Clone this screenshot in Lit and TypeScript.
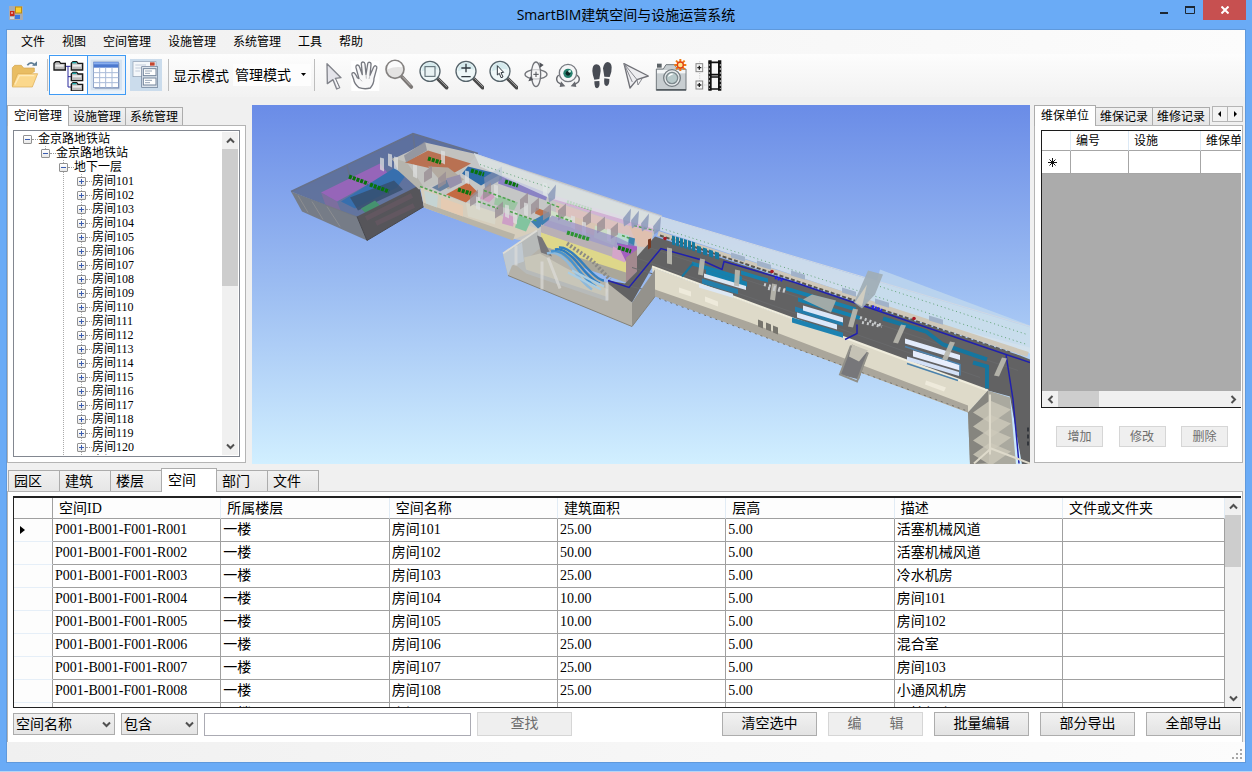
import { LitElement, html, svg, css } from "lit";
import { customElement, property, state } from "lit/decorators.js";
import { classMap } from "lit/directives/class-map.js";

const controls = css`
  * { box-sizing: border-box; }
  button, select, input { font: inherit; color: inherit; margin: 0; border-radius: 0; }
  svg { display: block; }
  .tabs { display: flex; align-items: flex-end; position: relative; z-index: 1; }
  .tab {
    border: 1px solid #acacac; border-bottom: 0; margin: 0 0 0 -1px; padding: 0 4px; height: 18px;
    line-height: 16px; background: linear-gradient(#f1f1f1, #e6e6e6); white-space: nowrap;
  }
  .tab:first-child { margin-left: 0; }
  .tab.on { background: #fff; height: 21px; margin-bottom: -1px; padding: 0 6px; }
  .panel { background: #fff; border: 1px solid #b4b4b4; }
  .push { border: 1px solid #adadad; background: linear-gradient(#f2f2f2, #e3e3e3); padding: 0; text-align: center; white-space: pre; }
  .push:disabled { border-color: #d6d6d6; background: #efefef; color: #6d6d6d; }
  .vbar { display: flex; flex-direction: column; width: 16px; background: #f0f0f0; }
  .hbar { display: flex; height: 16px; background: #f0f0f0; }
  .arrow { border: 0; padding: 0; background: none; display: grid; place-items: center; width: 16px; height: 17px; flex: none; }
  .thumb { background: #cdcdcd; }
  .space { flex: 1; }
`;

const chevron = (d: string) => svg`<svg width="9" height="9" viewBox="0 0 9 9"><path d=${d} fill="none" stroke="#505050" stroke-width="2"/></svg>`;
const UP = "M1 6.5L4.500 3L8 6.500", DOWN = "M1 2.500L4.500 6L8 2.500", LEFT = "M6.500 1L3 4.500L6.500 8", RIGHT = "M2.500 1L6 4.500L2.500 8";

const lens = svg`
  <path d="M60 60L86 86" stroke="#4a4a4a" stroke-width="11" stroke-linecap="round"/>
  <path d="M62 59L86 83" stroke="#9a9a9a" stroke-width="3" stroke-linecap="round"/>
  <circle cx="36" cy="37" r="30" fill="#eef7f8" stroke="#56646b" stroke-width="4"/>
  <path d="M12 37A24 24 0 0 1 60 32Q36 24 12 37" fill="#d5eaed"/>`;

const folders = svg`
  <path d="M40 22H56M48 22V84M48 53H60M48 84H60" stroke="#2a2a9c" stroke-width="3" fill="none"/>
  ${[[6, 9], [58, 9], [58, 41], [58, 72]].map(([x, y], i) => svg`
    <path d="M${x} ${y + 4}l5 -5h11l4 5h14v20h-34z" fill="#bdbdbd" stroke="#1b1b1b" stroke-width="4"/>
    <path d="M${x + 4} ${y + 8}h25v6h-25z" fill="#ededed"/>
    ${i ? svg`<path d="M${x + 3} ${y}h12v4h-12z" fill="#18a7a7"/>` : ""}`)}`;

const icons: Record<string, [number, unknown]> = {
  open: [30, svg`
    <path d="M4 82V26l7-7h20l7 8h32v12" fill="#e9bd62" stroke="#d0a24c" stroke-width="2"/>
    <path d="M4 84L20 44H80L64 84Z" fill="#fbd88c" stroke="#dba94f" stroke-width="2"/>
    <path d="M12 76L25 50H70" fill="none" stroke="#ffeab8" stroke-width="4"/>
    <path d="M49 19Q60 4 72 19" fill="none" stroke="#5f7d95" stroke-width="5"/><path d="M63 20H78V7Z" fill="#5f7d95"/>`],
  tree: [34, folders],
  grid: [34, svg`
    <rect x="2" y="2" width="94" height="92" fill="#d6e3f1"/><rect x="14" y="12" width="74" height="77" fill="#8798b8"/>
    <rect x="11" y="9" width="74" height="77" fill="#fff" stroke="#6c86b6" stroke-width="2"/>
    <rect x="11" y="9" width="74" height="17" fill="#4c79cf"/><rect x="11" y="10" width="74" height="6" fill="#89aeee"/>
    <path d="M29 26V86M47 26V86M66 26V86M11 41H85M11 56H85M11 71H85" stroke="#a9bbd8" stroke-width="3"/>`],
  cards: [32, svg`
    <rect width="96" height="96" fill="#cbdcec"/>
    <rect x="9" y="8" width="69" height="45" fill="#f4f7fa" stroke="#8c9cb0" stroke-width="2"/>
    <path d="M16 18H48M16 27H34M16 36H30" stroke="#c2ccda" stroke-width="3"/><rect x="60" y="10" width="14" height="10" fill="#c4452f"/>
    <rect x="35" y="23" width="48" height="62" fill="#dce3ec" stroke="#64778f" stroke-width="2"/>
    <rect x="40" y="29" width="38" height="21" fill="#fff" stroke="#71839a" stroke-width="3"/><rect x="40" y="57" width="38" height="21" fill="#fff" stroke="#71839a" stroke-width="3"/>
    <path d="M45 36H66M45 43H60M45 64H66M45 71H60" stroke="#99a7b8" stroke-width="3"/>`],
  select: [24, svg`<path d="M15 14L57 56L40 58L53 86L44 90L33 62L16 74Z" fill="#e4e4ea" stroke="#81838a" stroke-width="4" stroke-linejoin="round"/><path d="M38 61L49 86" stroke="#fff" stroke-width="3"/>`],
  hand: [30, svg`
    <rect x="4" y="6" width="84" height="90" fill="#fff"/>
    <path d="M27 86Q13 75 11 61L6 47Q5 40 11 41Q16 43 22 56L27 59L18 26Q17 18 23 18Q27 18 29 25L37 47L34 15Q34 9 39 9Q44 9 45 15L48 46L53 15Q54 9 59 10Q64 11 63 17L60 49L71 24Q74 19 78 21Q82 23 80 29L72 58Q72 75 61 87Q44 92 27 86Z" fill="#f8f8f9" stroke="#777980" stroke-width="4" stroke-linejoin="round"/>
    <path d="M31 61L36 67M48 46L49 59M60 49L57 60" stroke="#a0a0a5" stroke-width="2"/>`],
  zoom: [30, svg`
    <path d="M54 54L82 84" stroke="#7b7775" stroke-width="11" stroke-linecap="round"/><path d="M55 53L80 79" stroke="#bdb9b7" stroke-width="3"/>
    <circle cx="33" cy="31" r="27" fill="#e4e3e2" stroke="#858280" stroke-width="5"/><path d="M11 31A22 22 0 0 1 55 25Q32 21 11 31" fill="#fbfbfb"/>`],
  region: [32, svg`${lens}<rect x="21" y="23" width="30" height="29" fill="#e8f2f3" stroke="#55656c" stroke-width="3"/>`],
  scale: [30, svg`${lens}<path d="M22 27H50M36 14V40M22 53H50" stroke="#303940" stroke-width="4"/>`],
  pick: [30, svg`${lens}<path d="M28 20L47 40L39 41L45 54L39 56L34 43L28 48Z" fill="#fff" stroke="#303940" stroke-width="3"/>`],
  orbit: [28, svg`
    <ellipse cx="42" cy="46" rx="33" ry="14" fill="none" stroke="#73757a" stroke-width="4"/>
    <ellipse cx="42" cy="46" rx="14" ry="37" fill="#f5f5f6" fill-opacity=".7" stroke="#73757a" stroke-width="4"/>
    <path d="M34 46H50M42 38V54" stroke="#4b4d52" stroke-width="3"/><path d="M52 10L65 18L54 26ZM26 52L34 63L19 67Z" fill="#505258"/>`],
  eye: [28, svg`
    <path d="M14 48Q3 59 12 70L26 79M69 48Q81 59 72 70L58 79" fill="none" stroke="#67696f" stroke-width="4"/>
    <path d="M21 67L34 82L17 84ZM63 67L50 82L67 84Z" fill="#67696f"/>
    <circle cx="42" cy="42" r="26" fill="#f5f6f7" stroke="#777a80" stroke-width="4"/><circle cx="42" cy="43" r="14" fill="#27816f"/><circle cx="42" cy="43" r="7" fill="#0c2724"/><circle cx="47" cy="37" r="4" fill="#c9eee4"/>`],
  walk: [32, svg`
    <path d="M31 16Q19 17 19 36Q20 50 25 62L40 60L44 36Q45 17 31 16ZM25 67L40 66Q43 86 33 88Q25 88 25 67ZM65 9Q54 10 51 28L55 53L71 54Q78 38 77 25Q76 10 65 9ZM55 58L70 60Q71 80 61 81Q52 79 55 58Z" fill="#484c54"/>`],
  fly: [28, svg`
    <path d="M6 14L79 51L45 62L24 87Z" fill="#ededf0" stroke="#707177" stroke-width="4" stroke-linejoin="round"/>
    <path d="M6 14L45 62L48 78L61 58M6 14L31 69" fill="none" stroke="#888990" stroke-width="3"/>`],
  camera: [34, svg`
    <path d="M7 30H28L36 17H62L70 30H96V94H7Z" fill="#c8ced1" stroke="#72797d" stroke-width="3"/>
    <path d="M9 33H94V43H9Z" fill="#f3f5f6"/><path d="M7 92H96" stroke="#555c60" stroke-width="4"/><rect x="9" y="14" width="14" height="12" fill="#5b6266"/>
    <circle cx="54" cy="57" r="25" fill="#e7ebed" stroke="#747c81" stroke-width="4"/><circle cx="54" cy="57" r="17" fill="#b8c9ca" stroke="#7d898d" stroke-width="4"/><path d="M42 54A12 12 0 0 1 59 45Q49 49 42 54" fill="#fff"/>
    <path d="M79 0V36M61 18H97M66 5L92 31M92 5L66 31" stroke="#ef7b13" stroke-width="6"/><circle cx="79" cy="18" r="9" fill="#ffe58b" stroke="#e23f16" stroke-width="4"/>`],
  film: [32, svg`
    <path d="M23 7V92M23 26H46M23 78H46" stroke="#aaa" stroke-width="2" stroke-dasharray="3 4"/>
    ${[14, 66].map(y => svg`<rect x="12" y=${y} width="20" height="24" fill="#f5f5f5" stroke="#888" stroke-width="3"/><path d="M16 ${y + 12}H28M22 ${y + 6}V${y + 18}" stroke="#222" stroke-width="4"/>`)}
    <path d="M49 4H59V95H49ZM78 4H88V95H78Z" fill="#111"/><path d="M50 10H87M50 47H87M50 54H87M50 90H87" stroke="#111" stroke-width="5"/>
    <path d="M52 16V90M85 16V90" stroke="#fff" stroke-width="3" stroke-dasharray="4 8"/>`],
};

const icon = (name: string) => {
  const [w, body] = icons[name];
  return html`<svg width=${w} height="32" viewBox="0 0 ${w * 3} 96" aria-hidden="true">${body}</svg>`;
};

@customElement("room-tree")
class RoomTree extends LitElement {
  static styles = [controls, css`
    :host { display: flex; flex-direction: column; min-height: 0; font-size: 12px; }
    .panel { flex: 1; min-height: 0; display: flex; padding: 4px 5px 5px; }
    .box { flex: 1; display: flex; border: 1px solid #828790; min-width: 0; padding: 1px; }
    .scroll { flex: 1; overflow: hidden; }
    ul { list-style: none; margin: 0; padding: 0; }
    .root { margin-left: 8px; }
    ul ul { margin-left: 18px; background: repeating-linear-gradient(#aaa 0 1px, #fff 1px 2px) 4px 0 / 1px 100% no-repeat; }
    .root > li > ul { background-size: 1px 6px; }
    .node { display: flex; align-items: center; height: 14px; line-height: 14px; white-space: nowrap; }
    .node::after { content: ""; order: 1; width: 6px; border-top: 1px dotted #999; }
    .label { order: 2; }
    .fold { order: 0; width: 9px; height: 9px; padding: 0; border: 1px solid #919191; border-radius: 1px; background: linear-gradient(#fff, #e8e8e8); }
    .thumb { height: 137px; }
  `];

  node(name: string, open: boolean, children: unknown = "") {
    return html`<li role="treeitem" aria-expanded=${open}>
      <div class="node">
        <button class="fold" aria-label=${(open ? "收起" : "展开") + name}>
          <svg width="7" height="7" viewBox="0 0 7 7"><path d=${open ? "M1 3.500H6" : "M1 3.500H6M3.500 1V6"} stroke="#3a5cb0"/></svg>
        </button><span class="label">${name}</span>
      </div>${children}</li>`;
  }

  render() {
    const rooms = Array.from({ length: 21 }, (_, i) => "房间" + (101 + i));
    return html`
      <div class="tabs" role="tablist">
        <button class="tab on" role="tab">空间管理</button><button class="tab" role="tab">设施管理</button><button class="tab" role="tab">系统管理</button>
      </div>
      <div class="panel"><div class="box">
        <div class="scroll"><ul class="root" role="tree">
          ${this.node("金京路地铁站", true, html`<ul role="group">
            ${this.node("金京路地铁站", true, html`<ul role="group">
              ${this.node("地下一层", true, html`<ul role="group">${rooms.map(r => this.node(r, false))}</ul>`)}
            </ul>`)}
          </ul>`)}
        </ul></div>
        <div class="vbar"><button class="arrow" aria-label="向上">${chevron(UP)}</button><div class="thumb"></div><div class="space"></div><button class="arrow" aria-label="向下">${chevron(DOWN)}</button></div>
      </div></div>`;
  }
}

type Pt = [number, number];
const pts = (p: Pt[]) => p.map(q => q.join(",")).join(" ");

@customElement("model-view")
class ModelView extends LitElement {
  static styles = css`
    :host { display: block; min-width: 0; min-height: 0; overflow: hidden; background: linear-gradient(#6a8ce7, #9dbef2 52%, #d1efff); }
    svg { display: block; width: 100%; height: 100%; }
  `;

  /* A thin slab that follows the fall of the station axis. */
  bar(x: number, y: number, len: number, fill: string, thick = 5) {
    const d = len * 0.3;
    return svg`<polygon points=${pts([[x, y], [x + len, y + d], [x + len, y + d + thick], [x, y + thick]])} fill=${fill}/>`;
  }

  column(x: number, y: number, dx = 0, h = 16) {
    return svg`<polygon points=${pts([[x, y], [x + 5, y + 1], [x + 5 - dx, y + h + 1], [x - dx, y + h]])} fill="#b9b7ae" fill-opacity=".92"/>`;
  }

  render() {
    const greens: Pt[] = [[349, 177], [370, 185], [428, 159], [458, 190], [471, 171], [505, 182], [618, 248]];
    return html`<svg viewBox="252 105 778 360" preserveAspectRatio="xMidYMid slice" role="img" aria-label="金京路地铁站三维模型">
      <polygon points="291,192 413,134 478,154 455,180 420,190 357,218" fill="#566384" fill-opacity=".75"/>
      <path d="M291 192L413 134L478 154M347 166L350 178M413 134L415 151" fill="none" stroke="#66718b" stroke-width="1.500"/>
      <polygon points="321,193 380,164 388,174 337,202" fill="#a063bd" fill-opacity=".85"/>
      <polygon points="321,193 337,202 341,212 326,207" fill="#8d6b9f" fill-opacity=".6"/>
      <polygon points="341,202 395,168 407,174 397,188 355,209" fill="#376fae"/>
      <polygon points="350,198 394,181 403,190 358,211" fill="#354e6c" fill-opacity=".8"/>
      <polygon points="361,209 375,201 380,206 367,215" fill="#45926f"/>
      <polygon points="291,192 357,217 367,241 302,212" fill="#74787f" fill-opacity=".93"/>
      <path d="M298 196L308 213M312 202L323 220M327 207L340 227" stroke="#8b8d91" stroke-width="1"/>
      <polygon points="357,217 419,186 424,207 367,241" fill="#56555a"/>
      <path d="M366 219L412 196M376 224L414 206" stroke="#6a5965" stroke-width="5" opacity=".6"/>
      <path d="M357 217L367 241L424 207" fill="none" stroke="#48484c"/>

      <polygon points="392,160 409,152 425,143 478,155 560,182 662,216 652,240 626,282 540,243 516,240 420,188" fill="#cbc9c2" fill-opacity=".92"/>
      <polygon points="392,158 407,163 424,188 419,190 398,171" fill="#b5b4ad"/>
      <polygon points="405,163 428,151 471,164 453,174" fill="#b97152"/>
      <polygon points="404,156 425,142 427,151 406,163" fill="#8a8c98" fill-opacity=".8"/>
      <polygon points="446,195 468,183 478,193 466,203" fill="#c46a42"/>
      <polygon points="462,174 468,167 500,175 481,186" fill="#306ca8"/>
      <polygon points="500,175 548,194 546,201 498,184" fill="#8a83c4"/>
      <polygon points="484,178 502,167 502,180 485,189" fill="#7788ad" fill-opacity=".85"/>
      <polygon points="428,167 448,168 464,180 448,190" fill="#b3aaa0"/>
      <polygon points="432,188 447,180 455,184 440,192" fill="#68809f"/>
      <polygon points="446,179 460,175 462,183 450,189" fill="#9791ac"/>
      <polygon points="420,187 470,205 497,215 540,230 513,240 424,208" fill="#d6cebd"/>
      <polygon points="423,203 515,235 513,241 424,208" fill="#b9b4a6"/>
      <polygon points="424,191 438,196 437,208 426,204" fill="#c5d4d3"/>
      <polygon points="441,198 463,206 463,217 441,209" fill="#e5cbb2"/>
      <polygon points="466,203 496,213 495,225 468,217" fill="#d8d6c8"/>
      <polygon points="484,192 496,196 489,203 480,199" fill="#cda0c1"/>
      <polygon points="496,195 518,203 514,211 494,205" fill="#9dc4a4"/>
      <polygon points="504,213 515,218 513,227 502,224" fill="#cd9fc6"/>
      <polygon points="519,215 531,221 526,232 515,228" fill="#82c49f"/>
      <polygon points="536,208 549,213 547,219 535,214" fill="#bd7048"/>
      <polygon points="531,222 549,212 551,219 538,229" fill="#3f7fb1"/>
      <polygon points="554,196 654,226 652,234 553,201" fill="#d2b3d5"/>
      <polygon points="556,203 652,234 650,247 556,216" fill="#dcc2bf"/>
      <polygon points="551,211 573,219 571,228 549,221" fill="#d0dfc9"/>
      <polygon points="573,217 598,225 594,236 571,228" fill="#d9c5b4"/>
      <polygon points="595,226 617,234 614,246 594,238" fill="#cbddc5"/>
      <polygon points="629,226 652,233 652,248 638,247" fill="#dfc0af"/>
      <polygon points="617,234 635,239 634,247 617,245" fill="#3c82ae"/>
      <polygon points="617,233 629,236 628,246 617,243" fill="#b9dcd2"/>
      ${([[424, 166], [438, 172], [470, 190], [483, 183], [495, 202], [520, 193], [531, 198], [543, 204], [558, 204], [583, 211], [597, 217], [610, 223]] as Pt[]).map(([x, y]) =>
        svg`<polygon points=${pts([[x, y + 7], [x + 8, y], [x + 8, y + 12], [x, y + 17]])} fill="#9a8f95" fill-opacity=".8"/>`)}
      ${([[380, 158], [388, 154], [394, 157], [413, 165], [441, 151], [465, 171], [476, 197], [494, 185], [505, 205], [524, 203], [543, 183], [571, 216], [582, 222], [607, 229], [513, 211]] as Pt[]).map(([x, y]) =>
        svg`<polygon points=${pts([[x, y], [x + 4, y + 1], [x + 4, y + 14], [x, y + 12]])} fill="#dedfdf" fill-opacity=".75"/>`)}
      <polygon points="552,216 618,238 637,247 626,257 543,226" fill="#8c84c7" fill-opacity=".6"/>
      <polygon points="541,225 626,253 626,264 541,233" fill="#b9b0b5"/>
      <polygon points="541,233 626,262 626,274 541,246" fill="#ded78a"/>
      <polygon points="541,246 626,273 626,283 541,254" fill="#aaa79a"/>
      <polygon points="613,247 626,253 625,263 612,258" fill="#d4a5c9"/>
      <polygon points="617,244 637,247 637,256 626,262" fill="#a45fc0"/>
      <polygon points="626,258 637,250 637,272 626,284" fill="#a3898f"/>
      ${greens.map(([x, y], i) => svg`<path d="M${x} ${y}l${i < 2 ? 19 : 13} ${i < 2 ? 7 : 4}" stroke="#08740b" stroke-width="4" stroke-dasharray="3 1"/>`)}
      <path d="M567 233l23 7" stroke="#2b9430" stroke-width="4" stroke-dasharray="3 1"/>
      <path d="M567 202l25 8" stroke="#6ab068" stroke-width="3" stroke-dasharray="2 1"/>
      <path d="M420 187L450 198M484 191L516 203M478 202L498 209M510 212L538 222M547 203L560 208M556 216L572 222M634 226L654 231M622 236L630 239" stroke="#51a34f" stroke-width="1.500" stroke-dasharray="3 2"/>

      <polygon points="474,154 548,180 660,217 1030,328 1030,354 660,231 548,198 480,167" fill="#e1e9e9" fill-opacity=".72"/>
      <polygon points="880,270 1030,326 1030,348 870,307" fill="#c4dced" fill-opacity=".7"/>
      <path d="M474 154L548 180L660 217L1030 327" fill="none" stroke="#d0d8e3"/>
      <path d="M480 165L552 189M662 229L1027 345M880 287L1027 335" fill="none" stroke="#62a477" stroke-dasharray="1 3"/>
      ${([[548, 185], [623, 209], [631, 211], [641, 214], [653, 217]] as Pt[]).map(([x, y]) => svg`<polygon points=${pts([[x, y + 10], [x + 8, y], [x + 7, y + 14], [x + 1, y + 18]])} fill="#8796b8" fill-opacity=".8"/>`)}
      <path d="M658 234L1028 355" stroke="#cfc8b9" stroke-width="5"/>
      <path d="M660 236L1010 353" stroke="#57554f" stroke-width="2" stroke-dasharray="4 2"/>

      <polygon points="655,237 1020,356 1030,360 1030,465 1022,465 1010,397 988,391 750,304 652,268 632,303 608,294 608,281 625,284 637,272 637,257" fill="#626263"/>
      <path d="M622 285L675 297M632 268L700 289M638 259L980 378M649 248L1018 371" stroke="#68696b"/>
      <polygon points="652,268 750,304 988,391 968,413 750,332 655,296" fill="#dedac9"/>
      <polygon points="655,290 750,323 968,406 968,413 750,332 655,297" fill="#aaa69b"/>
      <path d="M652 267L988 391" stroke="#efecdc" stroke-width="2"/>
      <path d="M659 299L966 411" stroke="#77756f" stroke-dasharray="2 4"/>
      <polygon points="655,270 632,303 632,327 655,297" fill="#94928c"/>
      <polygon points="503,255 537,231 541,246 608,284 632,303 632,327 508,276" fill="#b5b2a9"/>
      <polygon points="503,255 537,231 541,248 524,262 560,276 608,290 608,302 526,274" fill="#b7bab9"/>
      <polygon points="524,258 540,254 565,268 608,290 606,297 526,270" fill="#c8c6b9"/>
      <polygon points="537,236 542,238 552,257 541,253" fill="#77767a"/>
      <polygon points="503,255 522,243 524,262 512,266 508,276" fill="#c1cbd4" fill-opacity=".9"/>
      <path d="M503 254L537 231" stroke="#dddcd6" stroke-width="2"/>
      <path d="M508 276L632 327L655 297" fill="none" stroke="#848278"/>
      ${[0, 1, 2, 3].map(i => svg`<path d="M${547 + i * 4} ${254 - i * 2}Q${559 + i * 3} ${250 - i} ${571 + i * 4} ${267 - i}T${592 + i * 4} ${290 - i * 3}" fill="none" stroke=${["#8db9dc", "#4793cf", "#2e7cc0", "#357fbd"][i]} stroke-width="2.500"/>`)}
      <path d="M572 271L604 287M568 273L601 290" fill="none" stroke="#a9cde4" stroke-width="2"/>
      <path d="M567 244L592 261L610 280" stroke="#8b8a85" stroke-width="4" fill="none" stroke-dasharray="2 2"/>
      <path d="M516 246V266M542 262V290M548 258L560 289M607 283V301" stroke="#dededb" stroke-width="3" opacity=".65"/>
      <polygon points="648,240 651,239 651,248 648,250" fill="#783820"/>

      <path d="M608 281L629 288L661 249L700 260L722 270L724 262L795 283L1006 355L1030 363M1006 355L1013 400L1019 464M845 340L857 334L857 325" fill="none" stroke="#2020ae" stroke-width="1.500"/>
      ${[0, 1, 2, 3, 4, 5].map(i => this.bar(672 + i * 4, 236 + i * 1.2, 3, "#16789f", 9))}
      ${[0, 1, 2, 3].map(i => this.bar(697 + i * 6, 246 + i * 2, 4, "#16789f", 7))}
      ${this.bar(692, 262, 50, "#1680ad", 4)}${this.bar(706, 270, 41, "#1680ad", 5)}${this.bar(741, 271, 27, "#1680ad", 4)}
      ${this.bar(704, 274, 42, "#dce7f4", 4)}${this.bar(702, 279, 36, "#257fab", 5)}${this.bar(699, 284, 34, "#dce7f4", 4)}
      ${this.bar(786, 287, 70, "#1680ad", 4)}${this.bar(798, 298, 62, "#1680ad", 4)}${this.bar(795, 307, 48, "#247dac", 5)}
      ${this.bar(803, 306, 40, "#dbe6f7", 5)}${this.bar(797, 313, 40, "#dce8fa", 5)}${this.bar(792, 318, 51, "#1d82b1", 5)}
      <polygon points="803,300 812,295 836,301 831,313" fill="#a1aaa8"/>
      <path d="M883 319L926 332L943 345L987 360M973 363L987 367V389" fill="none" stroke="#16769f" stroke-width="4"/>
      <path d="M693 264L682 277" stroke="#16769f" stroke-width="2"/>
      ${this.bar(905, 339, 55, "#e2ebfb", 5)}${this.bar(913, 351, 47, "#e7eefc", 6)}${this.bar(907, 357, 52, "#d3e1f7", 4)}
      <path d="M905 347L960 365V376M907 364L958 381" fill="none" stroke="#4b82ad" stroke-width="1.500"/>
      ${this.column(667, 248)}${this.column(700, 259, 2)}${this.column(735, 270, 1)}${this.column(772, 284, 2)}${this.column(853, 309, 5, 18)}${this.column(901, 325, 8, 18)}${this.column(950, 342, 8, 18)}${this.column(1002, 358, 8, 18)}
      <path d="M764 285l23 6M768 289l18 3M860 318l22 8M862 323l20 4" stroke="#c7cacc" stroke-width="3" stroke-dasharray="2 3"/>
      ${([[731, 253], [757, 261], [791, 271], [842, 288], [875, 299], [929, 316]] as Pt[]).map(([x, y]) => this.bar(x, y, 14, "#a1b2c9", 5))}
      ${([[665, 239], [772, 272], [914, 319]] as Pt[]).map(([x, y]) => svg`<circle cx=${x} cy=${y} r="1.800" fill="#a71824"/>`)}
      <path d="M775 278l8 3M872 307l10 4" stroke="#2222ed" stroke-width="3" stroke-dasharray="2 1"/>
      <polygon points="868,271 883,275 875,295 862,309 854,303" fill="#9facb5" fill-opacity=".92"/><polygon points="867,285 862,307 855,303" fill="#d0cdc1"/>
      <polygon points="852,345 868,353 859,380 840,375" fill="#77777a"/><polygon points="852,345 868,351 859,362 849,357" fill="#c5c2b5"/><path d="M851 346L840 375L857 382L868 353" fill="none" stroke="#919089" stroke-width="2"/>
      <path d="M758 320l5 2v7l-5-2zM766 323l5 2v7l-5-2zM773 326l5 2v7l-5-2z" fill="#77756d"/>
      <path d="M679 288l12 4v5l-12-4zM705 297l13 5v5l-13-5zM926 381l20 7-2 4-19-7z" fill="#eeeadb"/>
      <polygon points="968,413 988,391 1010,398 1016,465 970,465" fill="#aaa99f"/>
      <polygon points="968,413 988,391 989,463 970,465" fill="#86857f"/>
      ${[0, 1, 2, 3].map(i => svg`<polygon points=${pts([[973, 413 + i * 14], [990, 401 + i * 14], [1011, 410 + i * 14], [991, 424 + i * 14]])} fill="#cdc9ba" fill-opacity=".8"/>`)}
      <path d="M990 395V455M974 464L991 449L1030 464" fill="none" stroke="#dedacb" stroke-width="2"/>
      <path d="M1028 428V448" stroke="#33363c" stroke-width="2" stroke-dasharray="4 3"/>
    </svg>`;
  }
}

@customElement("maintenance-panel")
class MaintenancePanel extends LitElement {
  static styles = [controls, css`
    :host { display: flex; flex-direction: column; min-height: 0; font-size: 12px; }
    .spin { display: flex; margin: 0 0 3px auto; }
    .step { width: 16px; height: 16px; padding: 0; border: 1px solid #b5b5b5; margin-left: -1px; background: #f3f3f3; display: grid; place-items: center; }
    .panel { flex: 1; min-height: 0; display: flex; flex-direction: column; padding: 4px 1px 15px 6px; }
    .grid { flex: 1; display: flex; flex-direction: column; background: #ababab; border: 1px solid #1c1c1c; border-right: 0; overflow: hidden; }
    .view { flex: 1; overflow: hidden; }
    table { border-collapse: separate; border-spacing: 0; table-layout: fixed; width: 288px; background: #fff; }
    th, td { border: solid #a6a6a6; border-width: 0 1px 1px 0; padding: 0 0 0 5px; text-align: left; font-weight: 400; white-space: nowrap; }
    thead th { height: 20px; line-height: 18px; border-right-color: #dce9f5; }
    tbody tr > * { height: 23px; }
    tbody th { font-size: 16px; line-height: 20px; }
    .mark { width: 29px; } .code { width: 58px; } .item { width: 72px; }
    .thumb { width: 41px; }
    .actions { display: flex; justify-content: space-between; padding: 18px 13px 0 15px; }
    .push { width: 47px; height: 21px; line-height: 18px; }
  `];
  render() {
    return html`
      <div class="tabs" role="tablist">
        <button class="tab on" role="tab">维保单位</button><button class="tab" role="tab">维保记录</button><button class="tab" role="tab">维修记录</button>
        <div class="spin">
          <button class="step" aria-label="上一页"><svg width="6" height="8" viewBox="0 0 6 8"><path d="M4 1V7L1 4Z"/></svg></button>
          <button class="step" aria-label="下一页"><svg width="6" height="8" viewBox="0 0 6 8"><path d="M2 1V7L5 4Z"/></svg></button>
        </div>
      </div>
      <div class="panel">
        <div class="grid">
          <div class="view"><table>
            <colgroup><col class="mark"><col class="code"><col class="item"><col></colgroup>
            <thead><tr><th></th><th>编号</th><th>设施</th><th>维保单位</th></tr></thead>
            <tbody><tr><th scope="row" aria-label="新行"><svg width="11" height="11" viewBox="0 0 11 11"><path d="M5.500 1V10M1 5.500H10M2.500 2.500L8.500 8.500M8.500 2.500L2.500 8.500" stroke="#111"/></svg></th><td></td><td></td><td></td></tr></tbody>
          </table></div>
          <div class="hbar"><button class="arrow" aria-label="向左">${chevron(LEFT)}</button><div class="thumb"></div><div class="space"></div><button class="arrow" aria-label="向右">${chevron(RIGHT)}</button></div>
        </div>
        <div class="actions"><button class="push" disabled>增加</button><button class="push" disabled>修改</button><button class="push" disabled>删除</button></div>
      </div>`;
  }
}

@customElement("drop-field")
class DropField extends LitElement {
  @property() label = "";
  @property({ attribute: false }) options: string[] = [];
  static styles = [controls, css`
    :host { display: grid; }
    .field { display: grid; align-items: center; }
    select { grid-area: 1 / 1; width: 100%; height: 22px; appearance: none; border: 1px solid #acacac; padding: 0 18px 0 2px; background: linear-gradient(#f0f0f0, #e5e5e5); color: #000; }
    svg { grid-area: 1 / 1; justify-self: end; margin-right: 4px; pointer-events: none; }
  `];
  render() {
    return html`<label class="field"><select aria-label=${this.label}>${this.options.map(o => html`<option>${o}</option>`)}</select>${chevron(DOWN)}</label>`;
  }
}

@customElement("space-records")
class SpaceRecords extends LitElement {
  @state() private tab = "空间";
  static styles = [controls, css`
    :host { display: block; font-size: 14px; }
    .tabs { padding-left: 1px; }
    .tab { height: 21px; line-height: 19px; width: 52px; padding: 0 5px; text-align: left; }
    .tab.on { height: 24px; width: 56px; padding: 0 6px; }
    .panel { border-bottom: 0; padding: 4px 1px 6px 5px; }
    .grid { display: flex; height: 212px; border: solid #222; border-width: 2px 0 1px 1px; overflow: hidden; }
    .view { flex: 1; overflow: hidden; }
    table { border-collapse: separate; border-spacing: 0; table-layout: fixed; width: 100%; }
    th, td { height: 23px; border: solid #a0a0a0; border-width: 0 1px 1px 0; padding: 0 3px 0 2px; text-align: left; font-weight: 400; line-height: 20px; white-space: nowrap; }
    thead th { height: 21px; line-height: 19px; padding-left: 6px; border-right-color: #e2ecf5; background: #fdfdfd; }
    tbody th { border-bottom-color: #e6eff8; background: #fdfdfd; padding-left: 6px; }
    thead th:first-child { border-right-color: #a0a0a0; }
    .mark { width: 39px; } .col { width: 13.9%; }
    .thumb { height: 52px; }
    .tools { display: flex; align-items: center; gap: 6px; padding-top: 4px; }
    .by { width: 102px; } .how { width: 77px; }
    .term { flex: 0 1 267px; min-width: 80px; height: 23px; border: 1px solid #ababb3; background: #fff; padding: 0 4px; }
    .push { width: 95px; height: 24px; line-height: 20px; flex: none; }
    .batch { display: flex; gap: 11px; margin-left: auto; }
  `];
  render() {
    const rows = [
      ["001", "101", "25.00", "活塞机械风道"], ["002", "102", "50.00", "活塞机械风道"], ["003", "103", "25.00", "冷水机房"],
      ["004", "104", "10.00", "房间101"], ["005", "105", "10.00", "房间102"], ["006", "106", "25.00", "混合室"],
      ["007", "107", "25.00", "房间103"], ["008", "108", "25.00", "小通风机房"], ["009", "109", "25.00", "环控机房"],
    ];
    return html`
      <div class="tabs" role="tablist">${["园区", "建筑", "楼层", "空间", "部门", "文件"].map(t => html`
        <button role="tab" aria-selected=${t === this.tab} class=${classMap({ tab: true, on: t === this.tab })} @click=${() => (this.tab = t)}>${t}</button>`)}
      </div>
      <div class="panel">
        <div class="grid">
          <div class="view"><table>
            <colgroup><col class="mark">${[1, 2, 3, 4, 5, 6].map(() => html`<col class="col">`)}<col></colgroup>
            <thead><tr><th></th>${["空间ID", "所属楼层", "空间名称", "建筑面积", "层高", "描述", "文件或文件夹"].map(h => html`<th scope="col">${h}</th>`)}</tr></thead>
            <tbody>${rows.map(([id, room, area, note], i) => html`<tr>
              <th>${i ? "" : html`<svg width="6" height="10" viewBox="0 0 6 10" aria-label="当前行"><path d="M0 1L5 5L0 9Z"/></svg>`}</th>
              <td>P001-B001-F001-R${id}</td><td>一楼</td><td>房间${room}</td><td>${area}</td><td>5.00</td><td>${note}</td><td></td></tr>`)}</tbody>
          </table></div>
          <div class="vbar"><button class="arrow" aria-label="向上">${chevron(UP)}</button><div class="thumb"></div><div class="space"></div><button class="arrow" aria-label="向下">${chevron(DOWN)}</button></div>
        </div>
        <div class="tools">
          <drop-field class="by" label="字段" .options=${["空间名称"]}></drop-field>
          <drop-field class="how" label="条件" .options=${["包含"]}></drop-field>
          <input class="term" type="text" aria-label="查找内容">
          <button class="push" disabled>查找</button>
          <div class="batch"><button class="push">清空选中</button><button class="push" disabled>编　　辑</button><button class="push">批量编辑</button><button class="push">部分导出</button><button class="push">全部导出</button></div>
        </div>
      </div>`;
  }
}

@customElement("app-root")
class AppRoot extends LitElement {
  static styles = [controls, css`
    :host { display: flex; flex-direction: column; height: 100vh; overflow: hidden; background: #6aabf6; color: #000; padding: 0 6px 0 6px; border-bottom: 1px solid #b9d5f3;
      font-family: "Liberation Serif", "Noto Sans CJK SC", sans-serif; font-size: 12px; box-sizing: border-box; }
    .title, .menu, .toolbar { font-family: "Open Sans", "Noto Sans CJK SC", sans-serif; }
    .title { height: 29px; flex: none; display: grid; grid-template-columns: 1fr auto 1fr; }
    .title > svg { margin: 6px 0 0 3px; }
    .title h1 { margin: 0; font-size: 14px; font-weight: 400; line-height: 29px; }
    .winbtns { display: flex; justify-self: end; }
    .win { width: 26px; height: 20px; border: 0; padding: 0; background: none; display: grid; place-items: center; }
    .win.close { width: 43px; background: #c75050; }
    .client { flex: 1; min-height: 0; display: flex; flex-direction: column; background: #f0f0f0; border: 1px solid #5f99dc; }
    .menu { display: flex; height: 24px; padding-left: 5px; background: linear-gradient(90deg, #f0f0f0, #fcfcfc); }
    .menu button { border: 0; background: none; padding: 0 8px 0 9px; line-height: 20px; }
    .toolbar { display: flex; align-items: center; height: 43px; padding: 0 4px 2px; background: linear-gradient(#fdfdfd, #f2f2f2); font-size: 14px; }
    .tool { border: 0; background: none; padding: 0; flex: none; }
    .sep { width: 1px; height: 32px; background: #bdbdbd; margin: 0 1px 0 8px; flex: none; }
    .tool.boxed { border: 1px solid #3f9bf5; background: #fff; height: 40px; width: 39px; display: grid; place-items: center; }
    .tool.boxed + .boxed { background: #eaf2fa; margin-left: -1px; margin-right: 4px; }
    .tool + .sep { margin-left: 6px; }
    .mode { display: flex; align-items: center; margin: 0 3px; gap: 4px; }
    .combo { display: grid; align-items: center; width: 78px; background: #fdfdfd; }
    .combo select { grid-area: 1 / 1; appearance: none; border: 0; background: none; height: 22px; padding: 0 0 0 2px; }
    .combo svg { grid-area: 1 / 1; justify-self: end; margin-right: 5px; pointer-events: none; }
    .mode + .sep { margin-left: 0; }
    .nav { display: flex; gap: 4px; padding-left: 6px; }
    .work { flex: 1; min-height: 0; display: grid; grid-template-columns: 239px minmax(0, 1fr) 209px; grid-template-rows: minmax(0, 1fr); margin: 8px 2px 4px 0; }
    model-view { margin: 0 4px 0 6px; }
    room-tree, maintenance-panel { margin-bottom: 1px; }
    space-records { margin-right: 2px; flex: none; }
    .status { height: 20px; flex: none; background: linear-gradient(90deg, #f0f0f0, #fcfcfc); display: flex; align-items: flex-end; justify-content: flex-end; padding: 2px; }
    .frame { height: 8px; flex: none; }
  `];

  tool(name: string, label: string, boxed = false) {
    return html`<button class=${classMap({ tool: true, boxed })} aria-label=${label}>${icon(name)}</button>`;
  }

  render() {
    const nav: [string, string][] = [["select", "选择"], ["hand", "平移"], ["zoom", "缩放"], ["region", "窗口缩放"], ["scale", "比例"], ["pick", "选择缩放"], ["orbit", "旋转"], ["eye", "环视"], ["walk", "漫游"], ["fly", "飞行"], ["camera", "快照"], ["film", "动画"]];
    return html`
      <header class="title">
        <svg width="14" height="14" viewBox="0 0 14 14" aria-hidden="true"><rect width="14" height="14" fill="#a8acb4"/><rect x="6.500" y="1" width="6" height="6" fill="#ffcf2e" stroke="#b98c12"/><rect x="1" y="5" width="4.500" height="5" fill="#c92b1c"/><path d="M3 6V8" stroke="#fff"/><rect x="6" y="9" width="5" height="4" fill="#3a77e0"/><rect x="1" y="11" width="4" height="2" fill="#d5d9df"/></svg>
        <h1>SmartBIM建筑空间与设施运营系统</h1>
        <div class="winbtns">
          <button class="win" aria-label="最小化"><svg width="8" height="8" viewBox="0 0 8 8"><path d="M0 7H8" stroke="#1c2733" stroke-width="2"/></svg></button>
          <button class="win" aria-label="最大化"><svg width="10" height="8" viewBox="0 0 10 8"><path d="M.5 1H9.500V7.500H.5Z" fill="none" stroke="#1c2733"/><path d="M0 1H10" stroke="#1c2733" stroke-width="2"/></svg></button>
          <button class="win close" aria-label="关闭"><svg width="8" height="8" viewBox="0 0 8 8"><path d="M.5 .5L7.500 7.500M7.500 .5L.5 7.500" stroke="#fff" stroke-width="2"/></svg></button>
        </div>
      </header>
      <main class="client">
        <nav class="menu">${["文件", "视图", "空间管理", "设施管理", "系统管理", "工具", "帮助"].map(m => html`<button>${m}</button>`)}</nav>
        <div class="toolbar">
          ${this.tool("open", "打开")}<span class="sep"></span>
          ${this.tool("tree", "结构树", true)}${this.tool("grid", "数据表", true)}${this.tool("cards", "属性")}<span class="sep"></span>
          <div class="mode"><label for="mode">显示模式</label>
            <span class="combo"><select id="mode"><option>管理模式</option></select><svg width="5" height="3" viewBox="0 0 5 3"><path d="M0 0H5L2.500 3Z"/></svg></span>
          </div><span class="sep"></span>
          <div class="nav">${nav.map(([n, l]) => this.tool(n, l))}</div>
        </div>
        <div class="work"><room-tree></room-tree><model-view></model-view><maintenance-panel></maintenance-panel></div>
        <space-records></space-records>
        <div class="status"><svg width="12" height="12" viewBox="0 0 12 12" aria-hidden="true"><path d="M9 1h2v2h-2zM5 5h2v2h-2zM9 5h2v2h-2zM1 9h2v2h-2zM5 9h2v2h-2zM9 9h2v2h-2z" fill="#a8a8a8"/></svg></div>
      </main>
      <div class="frame"></div>`;
  }
}
